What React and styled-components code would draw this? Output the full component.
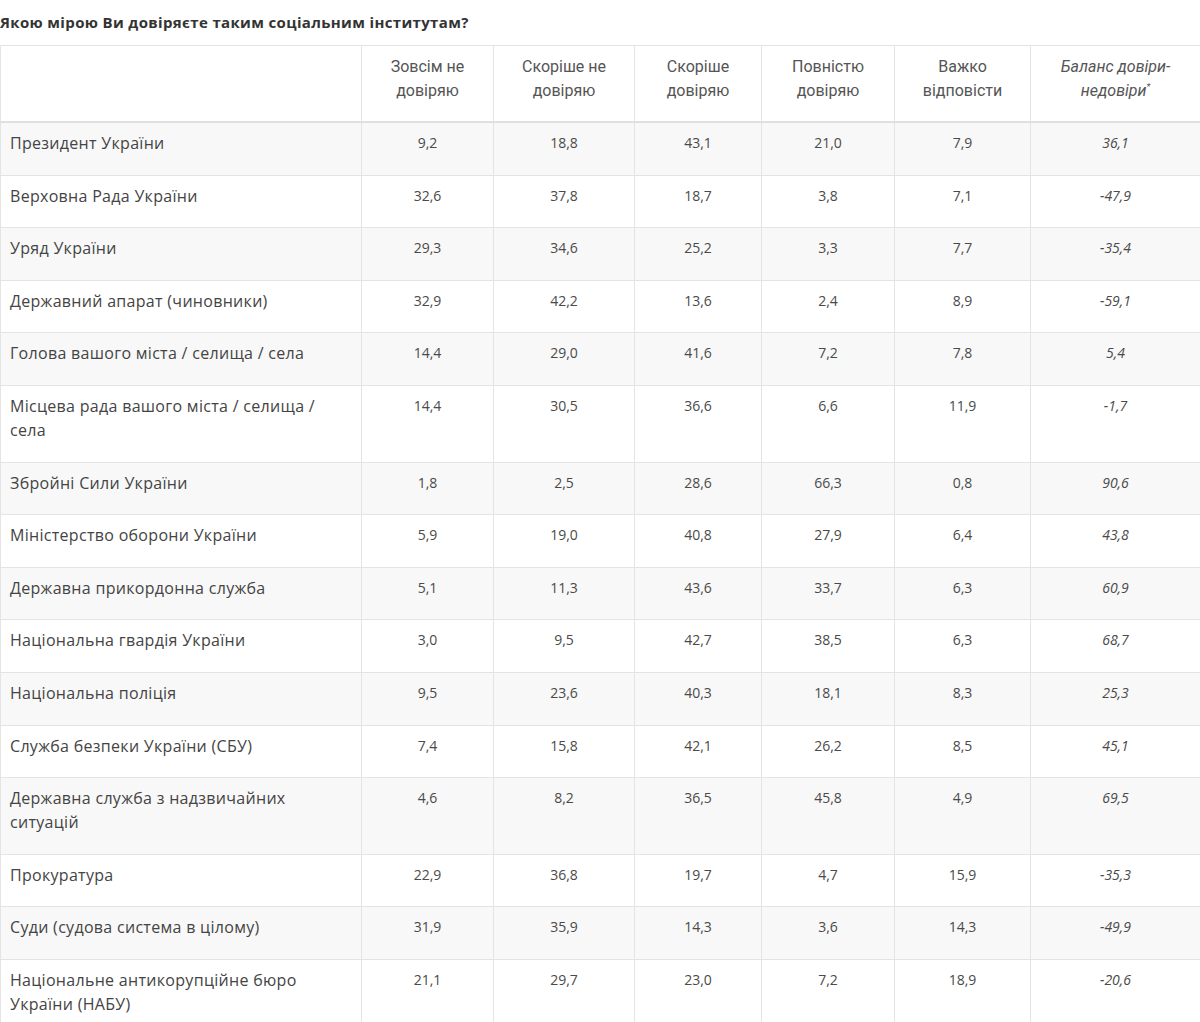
import React from "react";
import styled, { createGlobalStyle } from "styled-components";

const GlobalStyle = createGlobalStyle`
  body {
    margin: 0;
    background: #fff;
    font-family: "Open Sans", "Noto Sans", sans-serif;
    color: #444;
  }
`;

const Page = styled.div`
  width: 1200px;
`;

const Title = styled.h3`
  margin: 0;
  padding: 12px 0 13px;
  font-family: "Open Sans", "Noto Sans", sans-serif;
  font-size: 15px;
  line-height: 20px;
  font-weight: 700;
  letter-spacing: 0.35px;
  color: #333;
`;

const Table = styled.table`
  width: 1200px;
  border-collapse: collapse;
  table-layout: fixed;
`;

const HeadCell = styled.th`
  border: 1px solid #e4e4e4;
  border-bottom: 2px solid #e0e0e0;
  padding: 9px 10px 18px;
  vertical-align: top;
  text-align: center;
  font-family: Roboto, "Noto Sans", sans-serif;
  font-size: 16px;
  line-height: 24px;
  font-weight: 400;
  font-style: ${({ $italic }) => ($italic ? "italic" : "normal")};
  color: #555;
`;

const Row = styled.tr`
  background: ${({ $striped }) => ($striped ? "#f8f8f8" : "#fff")};
`;

const LabelCell = styled.td`
  border: 1px solid #e4e4e4;
  padding: 8px 9px 19.6px;
  vertical-align: top;
  font-size: 16px;
  line-height: 24px;
  letter-spacing: 0.3px;
  color: #444;
`;

const NumCell = styled.td`
  border: 1px solid #e4e4e4;
  padding: 8px 8px 19.6px;
  vertical-align: top;
  text-align: center;
  font-size: 14px;
  line-height: 24px;
  color: #4a4a4a;
  font-style: ${({ $italic }) => ($italic ? "italic" : "normal")};
`;

const Sup = styled.sup`
  font-size: 9px;
  line-height: 0;
`;

const widths = [361, 132, 141, 127, 133, 136, 170];

const rows = [
  ["Президент України", "9,2", "18,8", "43,1", "21,0", "7,9", "36,1"],
  ["Верховна Рада України", "32,6", "37,8", "18,7", "3,8", "7,1", "-47,9"],
  ["Уряд України", "29,3", "34,6", "25,2", "3,3", "7,7", "-35,4"],
  ["Державний апарат (чиновники)", "32,9", "42,2", "13,6", "2,4", "8,9", "-59,1"],
  ["Голова вашого міста / селища / села", "14,4", "29,0", "41,6", "7,2", "7,8", "5,4"],
  ["Місцева рада вашого міста / селища / села", "14,4", "30,5", "36,6", "6,6", "11,9", "-1,7"],
  ["Збройні Сили України", "1,8", "2,5", "28,6", "66,3", "0,8", "90,6"],
  ["Міністерство оборони України", "5,9", "19,0", "40,8", "27,9", "6,4", "43,8"],
  ["Державна прикордонна служба", "5,1", "11,3", "43,6", "33,7", "6,3", "60,9"],
  ["Національна гвардія України", "3,0", "9,5", "42,7", "38,5", "6,3", "68,7"],
  ["Національна поліція", "9,5", "23,6", "40,3", "18,1", "8,3", "25,3"],
  ["Служба безпеки України (СБУ)", "7,4", "15,8", "42,1", "26,2", "8,5", "45,1"],
  ["Державна служба з надзвичайних ситуацій", "4,6", "8,2", "36,5", "45,8", "4,9", "69,5"],
  ["Прокуратура", "22,9", "36,8", "19,7", "4,7", "15,9", "-35,3"],
  ["Суди (судова система в цілому)", "31,9", "35,9", "14,3", "3,6", "14,3", "-49,9"],
  ["Національне антикорупційне бюро України (НАБУ)", "21,1", "29,7", "23,0", "7,2", "18,9", "-20,6"],
];

export default function App() {
  return (
    <Page>
      <GlobalStyle />
      <Title>Якою мірою Ви довіряєте таким соціальним інститутам?</Title>
      <Table>
        <colgroup>
          {widths.map((w, i) => (
            <col key={i} style={{ width: w }} />
          ))}
        </colgroup>
        <thead>
          <tr>
            <HeadCell />
            <HeadCell>Зовсім не довіряю</HeadCell>
            <HeadCell>Скоріше не довіряю</HeadCell>
            <HeadCell>Скоріше довіряю</HeadCell>
            <HeadCell>Повністю довіряю</HeadCell>
            <HeadCell>Важко відповісти</HeadCell>
            <HeadCell $italic>
              Баланс довіри-
              <br />
              недовіри<Sup>*</Sup>
            </HeadCell>
          </tr>
        </thead>
        <tbody>
          {rows.map((r, i) => (
            <Row key={r[0]} $striped={i % 2 === 0}>
              <LabelCell>{r[0]}</LabelCell>
              {r.slice(1).map((v, j) => (
                <NumCell key={j} $italic={j === 5}>
                  {v}
                </NumCell>
              ))}
            </Row>
          ))}
        </tbody>
      </Table>
    </Page>
  );
}
